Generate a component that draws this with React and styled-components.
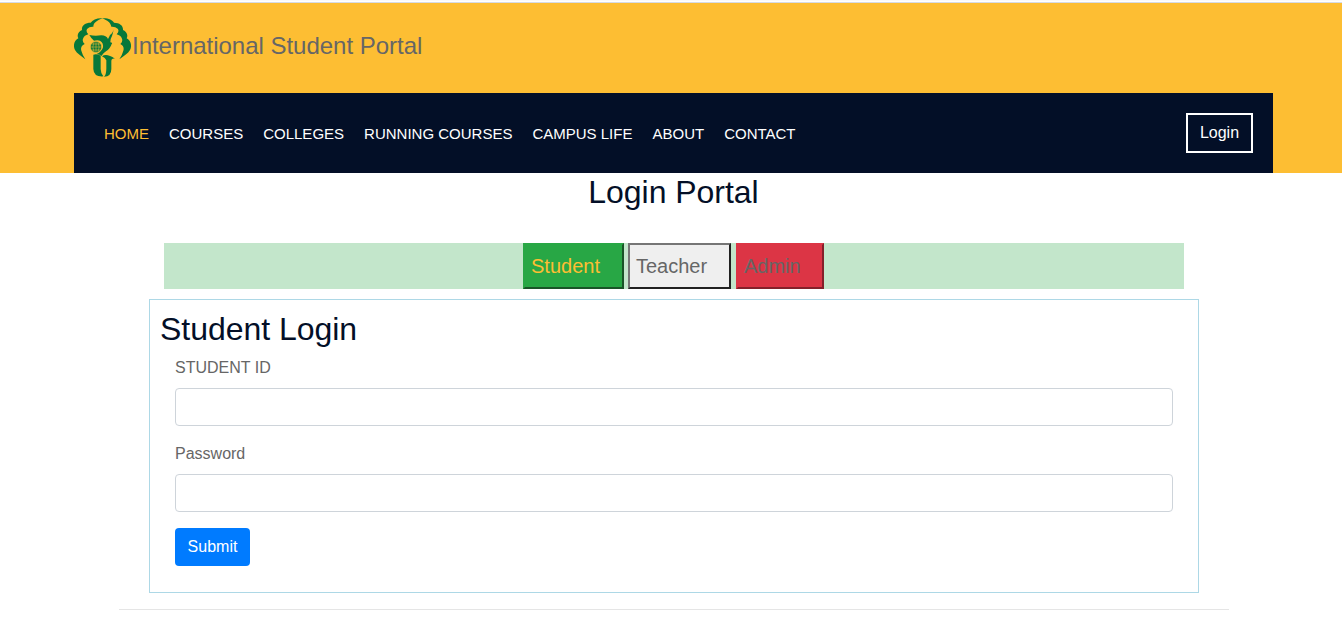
import React from "react";
import styled, { createGlobalStyle, css } from "styled-components";

const Global = createGlobalStyle`
  *, *::before, *::after { box-sizing: border-box; }
  body {
    margin: 0;
    background: #fff;
    color: #666;
    font: 400 16px/24px "Liberation Sans", Arial, sans-serif;
    overflow: hidden;
  }
`;

const TopLine = styled.div`
  height: 3px;
  background: #fff;
  border-top: 1px solid #fafafa;
  border-bottom: 1px solid #d5dbe6;
`;

const Header = styled.header`
  height: 170px;
  background: #fdbe33;
  padding: 0 69px 0 74px;
`;

const Brand = styled.a`
  display: flex;
  align-items: flex-start;
  height: 90px;
  padding-top: 15px;
  color: #666;
  font-size: 24px;
  line-height: 36px;
  white-space: nowrap;
`;

const BrandName = styled.span`
  margin: 10px 0 0 1px;
  letter-spacing: -0.02px;
`;

const Logo = styled.svg`
  display: block;
  width: 57px;
  height: 60px;
`;

const NavBar = styled.nav`
  display: flex;
  align-items: center;
  justify-content: space-between;
  height: 80px;
  padding: 0 20px 0 30px;
  background: #030f27;
`;

const NavLinks = styled.div`
  display: flex;
  gap: 20px;
  padding-top: 2px;
`;

const NavLink = styled.a`
  color: ${(p) => (p.$active ? "#fdbe33" : "#fff")};
  font-size: 15px;
  line-height: 24px;
  text-transform: uppercase;
  white-space: nowrap;
`;

const LoginButton = styled.a`
  width: 67px;
  height: 40px;
  border: 2px solid #fff;
  color: #fff;
  line-height: 35px;
  text-align: center;
`;

const Main = styled.main`
  width: 1110px;
  margin: 0 0 0 119px;
`;

const Heading = styled.h2`
  margin: 0;
  padding-right: ${(p) => (p.$center ? "1px" : "0")};
  color: #030f27;
  font-size: 32px;
  font-weight: 400;
  line-height: 38px;
  letter-spacing: -0.03px;
  text-align: ${(p) => (p.$center ? "center" : "left")};
`;

const TabStrip = styled.div`
  display: flex;
  justify-content: center;
  height: 46px;
  margin: 32px 45px 10px;
  padding-right: 1px;
  background: #c3e6cb;
`;

const tones = {
  green: css`
    width: 101px;
    background: #28a745;
    color: #fdbe33;
    border-color: #28a745 #195427 #195427 #28a745;
  `,
  plain: css`
    width: 103px;
    margin: 0 5px 0 4px;
    background: #efefef;
    color: #666;
    border-color: #767676 #212121 #212121 #767676;
  `,
  red: css`
    width: 88px;
    background: #dc3545;
    color: #666;
    border-color: #dc3545 #84202a #84202a #dc3545;
  `,
};

const Tab = styled.button`
  padding: 0 6px;
  border: 2px solid;
  font: 400 20px/42px "Liberation Sans", Arial, sans-serif;
  text-align: left;
  ${(p) => tones[p.$tone]}
`;

const Panel = styled.section`
  height: 294px;
  margin: 0 30px;
  padding: 10px;
  border: 1px solid #add8e6;
`;

const Form = styled.form`
  padding: 8px 15px 0;
`;

const Field = styled.div`
  display: flex;
  flex-direction: column;
  gap: 8px;
  margin-bottom: 16px;
`;

const Label = styled.label`
  height: 24px;
`;

const Input = styled.input`
  width: 100%;
  height: 38px;
  padding: 6px 12px;
  border: 1px solid #ced4da;
  border-radius: 4px;
  background: #fff;
`;

const Submit = styled.button`
  display: block;
  width: 75px;
  height: 38px;
  padding: 0;
  border: 0;
  border-radius: 4px;
  background: #007bff;
  color: #fff;
  font: 400 16px/38px "Liberation Sans", Arial, sans-serif;
`;

const Divider = styled.hr`
  margin: 16px 0;
  border: 0;
  border-top: 1px solid #e5e5e5;
`;

const links = ["Home", "Courses", "Colleges", "Running Courses", "Campus Life", "About", "Contact"];

function TreeLogo() {
  return (
    <Logo viewBox="30 54 171 180" fill="#07783a" aria-hidden="true">
      <path d="M116 55C98 54 86 60 80 68C63 68 52 77 54 90C43 95 38 105 43 115C29 123 27 139 33 150C39 161 50 166 64 178Q55 164 52 152Q48 139 62 132Q54 125 57 116Q61 106 73 103Q64 94 70 86Q76 79 88 80C88 68 100 61 116 55Z" />
      <path d="M114 55C134 54 145 60 150 68C167 68 178 77 177 90C188 95 193 105 188 115C202 123 204 139 198 150C192 161 181 166 166 178Q175 164 178 152Q182 139 169 132Q177 125 174 116Q170 106 158 103Q167 94 161 86Q154 79 142 80C140 68 131 62 114 55Z" />
      <path d="M76 105Q92 109 112 106Q127 106 132 117Q135 112 138 105Q146 101 149 88Q147 100 144 108Q138 118 139 127Q147 129 143 132Q138 147 126 154Q117 160 112 168Q108 164 98 162Q114 155 117 142Q119 129 108 122Q101 119 90 122Q82 116 76 105Z" />
      <circle cx="96" cy="141" r="17" stroke="#fdbe33" strokeWidth="2" />
      <path d="M80 141H112M83 132H109M83 150H109M96 125V157M90 126Q83 141 90 156M102 126Q109 141 102 156" fill="none" stroke="#fdbe33" strokeWidth="1.5" />
      <path d="M88 164Q99 161 110 167V207Q110 219 118 229Q89 231 88 207Z" />
      <path d="M114 169Q127 158 153 176Q142 174 142 184V207Q142 230 120 230Q127 225 127 205V181Q124 174 114 169Z" />
    </Logo>
  );
}

export default function App() {
  return (
    <>
      <Global />
      <TopLine />
      <Header>
        <Brand>
          <TreeLogo />
          <BrandName>International Student Portal</BrandName>
        </Brand>
        <NavBar>
          <NavLinks>
            {links.map((label, i) => (
              <NavLink key={label} $active={i === 0}>{label}</NavLink>
            ))}
          </NavLinks>
          <LoginButton>Login</LoginButton>
        </NavBar>
      </Header>
      <Main>
        <Heading $center>Login Portal</Heading>
        <TabStrip>
          <Tab $tone="green">Student</Tab>
          <Tab $tone="plain">Teacher</Tab>
          <Tab $tone="red">Admin</Tab>
        </TabStrip>
        <Panel>
          <Heading>Student Login</Heading>
          <Form>
            <Field>
              <Label htmlFor="sid">STUDENT ID</Label>
              <Input id="sid" />
            </Field>
            <Field>
              <Label htmlFor="pwd">Password</Label>
              <Input id="pwd" type="password" />
            </Field>
            <Submit type="button">Submit</Submit>
          </Form>
        </Panel>
        <Divider />
      </Main>
    </>
  );
}
